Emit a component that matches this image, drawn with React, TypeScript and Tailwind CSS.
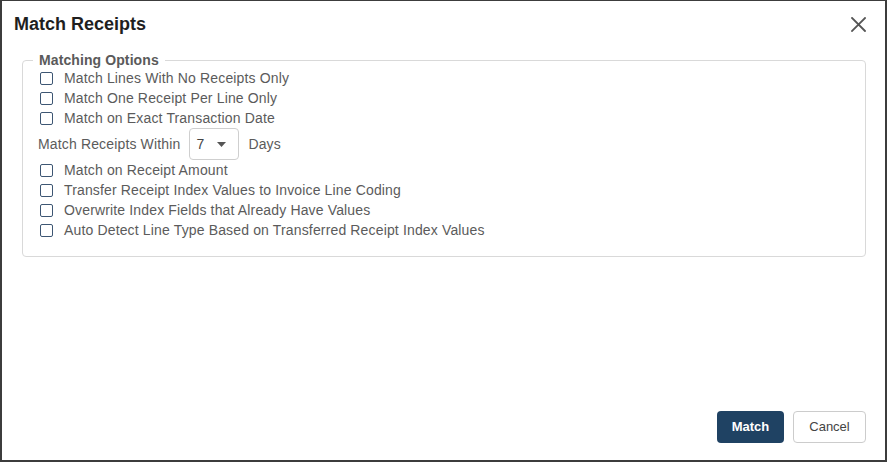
import React, { useState } from "react";

const options1 = [
  "Match Lines With No Receipts Only",
  "Match One Receipt Per Line Only",
  "Match on Exact Transaction Date",
];

const options2 = [
  "Match on Receipt Amount",
  "Transfer Receipt Index Values to Invoice Line Coding",
  "Overwrite Index Fields that Already Have Values",
  "Auto Detect Line Type Based on Transferred Receipt Index Values",
];

const CheckRow = ({ label }: { label: string }) => {
  const [checked, setChecked] = useState(false);
  return (
    <label className="flex items-center h-[20px] pl-[17px] cursor-pointer">
      <span
        onClick={() => setChecked(!checked)}
        className="w-[13px] h-[13px] border-[1.5px] border-[#3d5673] rounded-[2px] bg-white flex items-center justify-center"
      >
        {checked && (
          <svg width="9" height="9" viewBox="0 0 10 10">
            <path d="M1.5 5.2 L4 7.5 L8.5 2.5" stroke="#3d5673" strokeWidth="1.8" fill="none" />
          </svg>
        )}
      </span>
      <span className="ml-[11px] text-[14px] tracking-[0.15px] text-[#5b5b5b] leading-[20px]">{label}</span>
    </label>
  );
};

export default function App() {
  return (
    <div
      className="w-[887px] h-[462px] flex flex-col bg-white border-2 border-t border-[#3c3c3c]"
      style={{ fontFamily: '"Liberation Sans", Arial, sans-serif' }}
    >
      {/* header */}
      <div className="flex items-center justify-between pt-[11px] pl-[12px] pr-[19px]">
        <h2 className="text-[18px] leading-[24px] font-bold text-[#1f1f1f]">Match Receipts</h2>
        <button className="w-[16px] h-[16px] flex items-center justify-center">
          <svg width="15" height="15" viewBox="0 0 15 15">
            <path d="M1 1 L14 14 M14 1 L1 14" stroke="#555" strokeWidth="1.8" strokeLinecap="square" />
          </svg>
        </button>
      </div>

      {/* options */}
      <fieldset className="mt-[16px] ml-[20px] mr-[19px] border border-[#d9d9d9] rounded-[4px] pb-[16px]">
        <legend className="ml-[10px] px-[6px] text-[14px] leading-[16px] font-bold tracking-[0.1px] text-[#5a5a5a]">
          Matching Options
        </legend>
        {options1.map((o) => (
          <CheckRow key={o} label={o} />
        ))}
        <div className="flex items-center h-[32px] pl-[15px]">
          <span className="text-[14px] tracking-[0.15px] text-[#5b5b5b]">Match Receipts Within</span>
          <div className="ml-[9px] w-[50px] h-[32px] border border-[#cfcfcf] rounded-[4px] flex items-center pl-[6px]">
            <span className="text-[14px] text-[#444]">7</span>
            <svg className="ml-[13px]" width="9" height="5" viewBox="0 0 9 5">
              <path d="M0 0 L9 0 L4.5 5 Z" fill="#555" />
            </svg>
          </div>
          <span className="ml-[9px] text-[14px] tracking-[0.15px] text-[#5b5b5b]">Days</span>
        </div>
        {options2.map((o) => (
          <CheckRow key={o} label={o} />
        ))}
      </fieldset>

      {/* footer */}
      <div className="mt-auto flex justify-end gap-[9px] pr-[19px] pb-[17px]">
        <button className="w-[67px] h-[32px] rounded-[4px] bg-[#1f4263] text-white text-[13px] font-bold">
          Match
        </button>
        <button className="w-[73px] h-[32px] rounded-[4px] border border-[#cccccc] bg-white text-[#444] text-[13px]">
          Cancel
        </button>
      </div>
    </div>
  );
}
